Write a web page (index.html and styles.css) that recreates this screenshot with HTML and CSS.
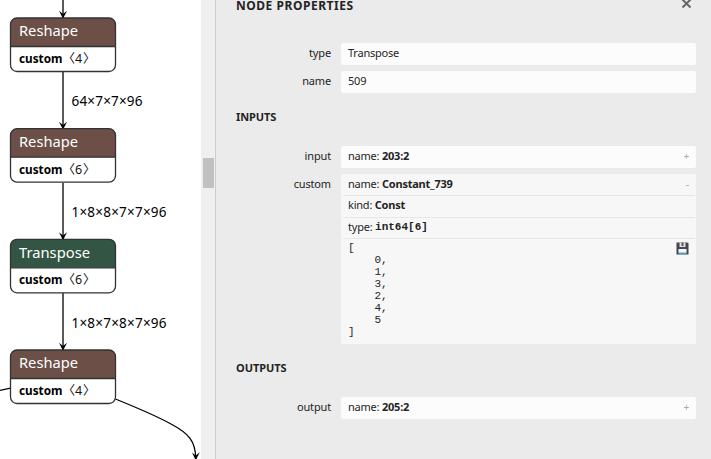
FILE: index.html
```html
<!DOCTYPE html>
<html lang="en">
<head>
<meta charset="utf-8">
<title>Node Properties</title>
<link rel="stylesheet" href="styles.css">
</head>
<body>
<main class="app">
  <section class="graph">
    <svg class="canvas" width="201" height="459" viewBox="0 0 201 459">
      <defs>
        <marker id="arrow" viewBox="0 0 10 10" refX="9" refY="5" markerWidth="8" markerHeight="8" markerUnits="userSpaceOnUse" orient="auto"><path d="M0 0L10 5L0 10L4 5Z"/></marker>
        <g id="frame">
          <path class="divider" d="M0 28.500H105"/>
          <rect class="outline" width="105" height="53.500" rx="6.500"/>
        </g>
        <path id="head" d="M0 28.500V6.500Q0 0 6.500 0H98.500Q105 0 105 6.500V28.500Z"/>
      </defs>
      <g class="edges">
        <path d="M63 -5V18"/>
        <path d="M63 72V129"/>
        <path d="M63 183V239.500"/>
        <path d="M63 293V350"/>
        <path d="M115.500 399C135 407 155 415 171 424C188 433 196 441 195.700 459.500"/>
        <path class="plain" d="M-2 390.700L10.500 388.200"/>
      </g>
      <g transform="translate(10.500 18)">
        <use href="#head" class="brown"/><use href="#frame"/>
        <text class="op" x="8.500" y="18.300" textLength="59" lengthAdjust="spacingAndGlyphs">Reshape</text>
        <text class="attr" x="8.500" y="45" textLength="43.500" lengthAdjust="spacingAndGlyphs">custom</text>
        <text class="dim" x="52 64.500 72.500" y="45">〈4〉</text>
      </g>
      <g transform="translate(10.500 128.700)">
        <use href="#head" class="brown"/><use href="#frame"/>
        <text class="op" x="8.500" y="18.300" textLength="59" lengthAdjust="spacingAndGlyphs">Reshape</text>
        <text class="attr" x="8.500" y="45" textLength="43.500" lengthAdjust="spacingAndGlyphs">custom</text>
        <text class="dim" x="52 64.500 72.500" y="45">〈6〉</text>
      </g>
      <g transform="translate(10.500 239.300)">
        <use href="#head" class="green"/><use href="#frame"/>
        <text class="op" x="8.500" y="18.300" textLength="71" lengthAdjust="spacingAndGlyphs">Transpose</text>
        <text class="attr" x="8.500" y="45" textLength="43.500" lengthAdjust="spacingAndGlyphs">custom</text>
        <text class="dim" x="52 64.500 72.500" y="45">〈6〉</text>
      </g>
      <g transform="translate(10.500 350)">
        <use href="#head" class="brown"/><use href="#frame"/>
        <text class="op" x="8.500" y="18.300" textLength="59" lengthAdjust="spacingAndGlyphs">Reshape</text>
        <text class="attr" x="8.500" y="45" textLength="43.500" lengthAdjust="spacingAndGlyphs">custom</text>
        <text class="dim" x="52 64.500 72.500" y="45">〈4〉</text>
      </g>
      <text class="shape" x="71.500" y="106" textLength="71">64×7×7×96</text>
      <text class="shape" x="71.500" y="217" textLength="95">1×8×8×7×7×96</text>
      <text class="shape" x="71.500" y="328" textLength="95">1×8×7×8×7×96</text>
    </svg>
  </section>
  <div class="scrollbar"><div class="thumb"></div></div>
  <aside class="panel">
    <header class="title">
      <h1>NODE PROPERTIES</h1>
      <svg class="close" width="11" height="11" viewBox="0 0 11 11"><path d="M1.500 1.500L9.500 9.500M9.500 1.500L1.500 9.500"/></svg>
    </header>
    <div class="rows">
      <div class="row"><span class="label">type</span><div class="value"><div class="line">Transpose</div></div></div>
      <div class="row"><span class="label">name</span><div class="value"><div class="line">509</div></div></div>
    </div>
    <h2>INPUTS</h2>
    <div class="rows">
      <div class="row"><span class="label">input</span><div class="value"><div class="line"><span>name: <b>203:2</b></span><span class="toggle">+</span></div></div></div>
      <div class="row"><span class="label">custom</span>
        <div class="value open">
          <div class="line"><span>name: <b>Constant_739</b></span><span class="toggle">-</span></div>
          <div class="line sub">kind:&nbsp;<b>Const</b></div>
          <div class="line sub">type:&nbsp;<b class="code">int64[6]</b></div>
          <div class="tensor">
<pre>[
    0,
    1,
    3,
    2,
    4,
    5
]</pre>
            <svg class="save" width="13" height="13" viewBox="0 0 13 13">
              <path fill="#45454b" d="M0.500 0.500H11.500L12.500 1.500V12.500H0.500Z"/>
              <path fill="#e8dfe2" d="M3.500 0.500H9.500V5H3.500Z"/>
              <path fill="#55555b" d="M5.500 0.500H7.500V4H5.500Z"/>
              <path fill="#f7fbfd" d="M2.500 7H10.500V11H2.500Z"/>
              <path fill="#4ba3c7" d="M2.500 10.500H10.500V12H2.500Z"/>
            </svg>
          </div>
        </div>
      </div>
    </div>
    <h2>OUTPUTS</h2>
    <div class="rows">
      <div class="row"><span class="label">output</span><div class="value"><div class="line"><span>name: <b>205:2</b></span><span class="toggle">+</span></div></div></div>
    </div>
  </aside>
</main>
</body>
</html>
```
FILE: styles.css
```css
body { margin: 0; font: 11px "Noto Sans", sans-serif; color: #242424; }
.app { display: flex; width: 711px; height: 459px; overflow: hidden; background: #fff; }
.graph { width: 201px; }
.canvas { display: block; }
.edges path { fill: none; stroke: #000; stroke-width: 1.3; marker-end: url(#arrow); }
.edges .plain { marker-end: none; }
.brown { fill: #6c4f47; }
.green { fill: #335544; }
.outline, .divider { fill: none; stroke: #333; stroke-width: 1.3; }
.op { font-size: 15px; fill: #fff; }
.attr { font-size: 12.5px; font-weight: 700; fill: #000; }
.dim { font: 12.5px "Noto Sans", "Noto Sans CJK SC", sans-serif; fill: #111; }
.shape { font-size: 13.5px; fill: #000; }
.scrollbar { width: 14px; background: #efefef; }
.thumb { width: 11px; height: 30px; margin: 158px 0 0 2px; background: #c1c1c1; }
.panel { flex: 1; box-sizing: border-box; background: #ebebeb; border-left: 1px solid #ccc; padding: 0 15px 0 20px; }
.title { display: flex; justify-content: space-between; height: 43px; }
.title h1 { margin: 0; font-size: 12px; line-height: 11px; letter-spacing: 0.53px; }
.close { margin: -2px 4px 0 0; }
.close path { stroke: #666; stroke-width: 2; }
h2 { margin: 0; height: 53px; padding-top: 16px; box-sizing: border-box; font-size: 11px; line-height: 16px; letter-spacing: -0.07px; }
.rows { display: flex; flex-direction: column; gap: 6px; }
.row { display: flex; align-items: flex-start; }
.label { width: 95px; margin-right: 10px; line-height: 20px; text-align: right; letter-spacing: -0.15px; }
.value { flex: 1; background: #fcfcfc; border-radius: 2px; letter-spacing: -0.22px; }
.open { background: #f7f7f7; }
.line { display: flex; justify-content: space-between; height: 22px; padding: 0 7px; line-height: 20px; }
.open > .line:first-child { height: 21px; }
.open > .sub { justify-content: flex-start; height: 21.5px; line-height: 18px; margin: 0 1px 0 2px; padding: 0 5px; border-top: 1px solid #e7e7e7; box-sizing: border-box; }
.toggle { color: #aaa; font-size: 10px; }
.code { font-family: "Liberation Mono", monospace; font-size: 11px; letter-spacing: 0; }
.tensor { display: flex; justify-content: space-between; align-items: flex-start; height: 106px; box-sizing: border-box; margin: 0 1px 0 2px; padding: 3px 6px 0 5px; border-top: 1px solid #e7e7e7; }
pre { margin: 0; font: 11px/12px "Liberation Mono", monospace; letter-spacing: 0; }
```
